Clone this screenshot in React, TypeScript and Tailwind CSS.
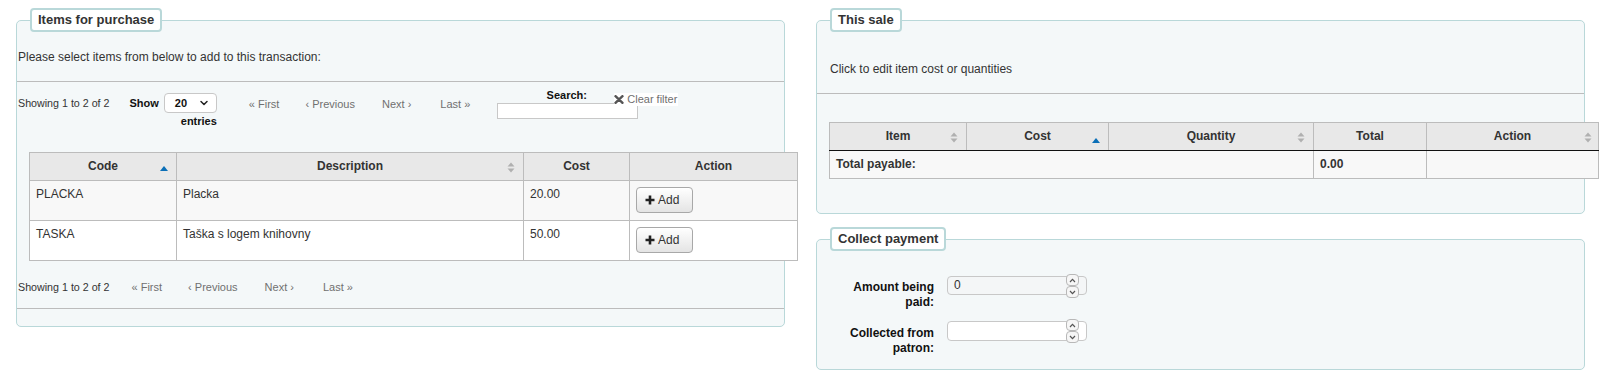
import { ChevronDown } from "lucide-react";

const font = "font-['Liberation_Sans',Arial,sans-serif]";

const SortBoth = () => (
	<svg width="8" height="11" viewBox="0 0 8 11" className="inline-block">
		<path d="M4 0.5 L7.5 4.5 H0.5 Z" fill="#b0b0b0" />
		<path d="M4 10.5 L7.5 6.5 H0.5 Z" fill="#b0b0b0" />
	</svg>
);

const SortAsc = () => (
	<svg width="8" height="5" viewBox="0 0 8 5" className="inline-block">
		<path d="M4 0 L8 5 H0 Z" fill="#0b6fb7" />
	</svg>
);

const Legend = ({ children }: { children: string }) => (
	<legend className="ml-[13px] h-[24px] px-[6px] bg-white border-2 border-[#b9d8d9] rounded-[4px] text-[13px] font-bold leading-[20px] text-[#333]">
		{children}
	</legend>
);

const Pager = ({ gapLeft }: { gapLeft: number }) => (
	<div className="flex items-center text-[11px] text-[#707070] whitespace-nowrap" style={{ marginLeft: gapLeft }}>
		<span>« First</span>
		<span className="ml-[26px]">‹ Previous</span>
		<span className="ml-[27px]">Next ›</span>
		<span className="ml-[29px]">Last »</span>
	</div>
);

const AddButton = () => (
	<button className="flex items-center gap-[3px] h-[26px] w-[57px] pl-[8px] rounded-[4px] border border-[#a8a8a8] bg-gradient-to-b from-white to-[#e4e4e4] text-[12px] text-[#333] shadow-[inset_0_1px_0_#fff]">
		<svg width="10" height="10" viewBox="0 0 10 10">
			<path d="M5 0.5 V9.5 M0.5 5 H9.5" stroke="#222" strokeWidth="2.6" />
		</svg>
		<span>Add</span>
	</button>
);

const items = [
	{ code: "PLACKA", desc: "Placka", cost: "20.00" },
	{ code: "TASKA", desc: "Taška s logem knihovny", cost: "50.00" },
];

const Spinner = () => (
	<div className="absolute right-[7px] top-[-3px] flex flex-col">
		<div className="w-[13px] h-[12px] rounded-[4px] border border-[#b8b8b8] bg-[#f6f6f6] flex items-center justify-center">
			<svg width="7" height="5" viewBox="0 0 7 5"><path d="M1 4 L3.5 1.3 L6 4" stroke="#555" strokeWidth="1.2" fill="none" /></svg>
		</div>
		<div className="w-[13px] h-[12px] rounded-[4px] border border-[#b8b8b8] bg-[#f6f6f6] flex items-center justify-center">
			<svg width="7" height="5" viewBox="0 0 7 5"><path d="M1 1 L3.5 3.7 L6 1" stroke="#555" strokeWidth="1.2" fill="none" /></svg>
		</div>
	</div>
);

export default function App() {
	return (
		<div className={`${font} bg-white w-[1600px] h-[370px] overflow-hidden flex gap-[31px] pl-[16px] pt-[8px] text-[#333]`}>
			{/* Items for purchase */}
			<div className="w-[769px] shrink-0">
				<fieldset className="min-w-0 w-full border border-[#b9d8d9] rounded-[5px] bg-[#f4f8f9] pb-[17px]">
					<Legend>Items for purchase</Legend>
					<p className="pt-[18px] pl-[1px] text-[12px] leading-[15px]">
						Please select items from below to add to this transaction:
					</p>
					<hr className="mt-[16px] border-[#bcbcbc]" />

					<div className="flex items-start pt-[13px] h-[70px]">
						<span className="mt-[1px] pl-[1px] text-[10.7px] leading-[15px] whitespace-nowrap">Showing 1 to 2 of 2</span>
						<div className="ml-[20px] flex flex-col items-end">
							<div className="flex items-center gap-[5px] -mt-[2px]">
								<span className="text-[11px] font-bold text-[#111]">Show</span>
								<div className="flex items-center justify-between w-[53px] h-[20px] px-[10px] bg-white border border-[#c8c8c8] rounded-[4px] text-[11px] font-bold text-[#111]">
									<span>20</span>
									<ChevronDown size={12} strokeWidth={3} className="text-[#222] -mr-[4px]" />
								</div>
							</div>
							<span className="text-[11px] font-bold text-[#111] leading-[14px] mt-[1px]">entries</span>
						</div>
						<div className="mt-[1px]">
							<Pager gapLeft={32} />
						</div>
						<div className="relative ml-[27px] -mt-[7px] flex flex-col items-center">
							<span className="text-[11px] font-bold text-[#111] leading-[14px] ml-[-2px]">Search:</span>
							<div className="mt-[1px] w-[141px] h-[16px] bg-white border border-[#c8c8c8]" />
							<div className="absolute left-[117px] top-[5px] flex items-center gap-[3px] bg-white pr-[1px] text-[11px] leading-[13px] text-[#707070] whitespace-nowrap">
								<svg width="10" height="9" viewBox="0 0 10 9">
									<path d="M1.5 1.2 L8.5 7.8 M8.5 1.2 L1.5 7.8" stroke="#555" strokeWidth="2.4" strokeLinecap="round" />
								</svg>
								<span>Clear filter</span>
							</div>
						</div>
					</div>

					<table className="ml-[12px] w-[768px] table-fixed border-collapse text-[12px] leading-[15px]">
						<colgroup>
							<col className="w-[147px]" />
							<col className="w-[347px]" />
							<col className="w-[106px]" />
							<col className="w-[168px]" />
						</colgroup>
						<thead>
							<tr className="bg-[#e8e8e8] h-[28px]">
								<th className="relative border border-[#bcbcbc] font-bold text-center">
									Code
									<span className="absolute right-[8px] top-[9px] leading-none"><SortAsc /></span>
								</th>
								<th className="relative border border-[#bcbcbc] font-bold text-center">
									Description
									<span className="absolute right-[8px] top-[8px] leading-none"><SortBoth /></span>
								</th>
								<th className="border border-[#bcbcbc] font-bold text-center">Cost</th>
								<th className="border border-[#bcbcbc] font-bold text-center">Action</th>
							</tr>
						</thead>
						<tbody>
							{items.map((it, i) => (
								<tr key={it.code} className={i % 2 === 0 ? "bg-[#f8f8f8]" : "bg-white"}>
									<td className="h-[40px] align-top border border-[#bcbcbc] px-[6px] pt-[6px]">{it.code}</td>
									<td className="align-top border border-[#bcbcbc] px-[6px] pt-[6px]">{it.desc}</td>
									<td className="align-top border border-[#bcbcbc] px-[6px] pt-[6px]">{it.cost}</td>
									<td className="align-top border border-[#bcbcbc] pl-[6px] pt-[6px]"><AddButton /></td>
								</tr>
							))}
						</tbody>
					</table>

					<div className="flex items-center mt-[19px] h-[15px]">
						<span className="pl-[1px] text-[10.7px] whitespace-nowrap">Showing 1 to 2 of 2</span>
						<Pager gapLeft={22} />
					</div>
					<hr className="mt-[13px] border-[#bcbcbc]" />
				</fieldset>
			</div>

			{/* Right column */}
			<div className="w-[769px] shrink-0 flex flex-col">
				<fieldset className="min-w-0 w-full border border-[#b9d8d9] rounded-[5px] bg-[#f4f8f9] pb-[34px]">
					<Legend>This sale</Legend>
					<p className="pt-[30px] pl-[13px] text-[12px] leading-[15px]">Click to edit item cost or quantities</p>
					<hr className="mt-[16px] border-[#bcbcbc]" />
					<table className="mt-[28px] ml-[12px] w-[769px] table-fixed border-collapse text-[12px] leading-[15px]">
						<colgroup>
							<col className="w-[137px]" />
							<col className="w-[142px]" />
							<col className="w-[205px]" />
							<col className="w-[113px]" />
							<col className="w-[172px]" />
						</colgroup>
						<thead>
							<tr className="bg-[#e8e8e8] h-[28px]">
								<th className="relative border border-[#bcbcbc] border-b-[#111] font-bold text-center">
									Item
									<span className="absolute right-[8px] top-[8px] leading-none"><SortBoth /></span>
								</th>
								<th className="relative border border-[#bcbcbc] border-b-[#111] font-bold text-center">
									Cost
									<span className="absolute right-[8px] top-[11px] leading-none"><SortAsc /></span>
								</th>
								<th className="relative border border-[#bcbcbc] border-b-[#111] font-bold text-center">
									Quantity
									<span className="absolute right-[8px] top-[8px] leading-none"><SortBoth /></span>
								</th>
								<th className="border border-[#bcbcbc] border-b-[#111] font-bold text-center">Total</th>
								<th className="relative border border-[#bcbcbc] border-b-[#111] font-bold text-center">
									Action
									<span className="absolute right-[6px] top-[8px] leading-none"><SortBoth /></span>
								</th>
							</tr>
						</thead>
						<tfoot>
							<tr className="bg-[#f8f8f8] h-[28px]">
								<td colSpan={3} className="border border-[#bcbcbc] px-[6px] font-bold">Total payable:</td>
								<td className="border border-[#bcbcbc] px-[6px] font-bold">0.00</td>
								<td className="border border-[#bcbcbc]" />
							</tr>
						</tfoot>
					</table>
				</fieldset>

				<fieldset className="min-w-0 w-full mt-[13px] border border-[#b9d8d9] rounded-[5px] bg-[#f4f8f9] h-[200px]">
					<Legend>Collect payment</Legend>
					<div className="pt-[29px] flex flex-col gap-[16px]">
						<div className="flex items-start">
							<label className="w-[100px] ml-[17px] text-right text-[12px] font-bold leading-[15px] text-[#111]">
								Amount being paid:
							</label>
							<div className="relative ml-[13px] mt-[-4px] w-[140px] h-[19px] border border-[#c8c8c8] rounded-[4px] bg-[#f4f6f7] text-[12px] leading-[17px] pl-[6px]">
								0
								<Spinner />
							</div>
						</div>
						<div className="flex items-start">
							<label className="w-[100px] ml-[17px] text-right text-[12px] font-bold leading-[15px] text-[#111]">
								Collected from patron:
							</label>
							<div className="relative ml-[13px] mt-[-5px] w-[140px] h-[20px] border border-[#c8c8c8] rounded-[4px] bg-white">
								<Spinner />
							</div>
						</div>
					</div>
				</fieldset>
			</div>
		</div>
	);
}
